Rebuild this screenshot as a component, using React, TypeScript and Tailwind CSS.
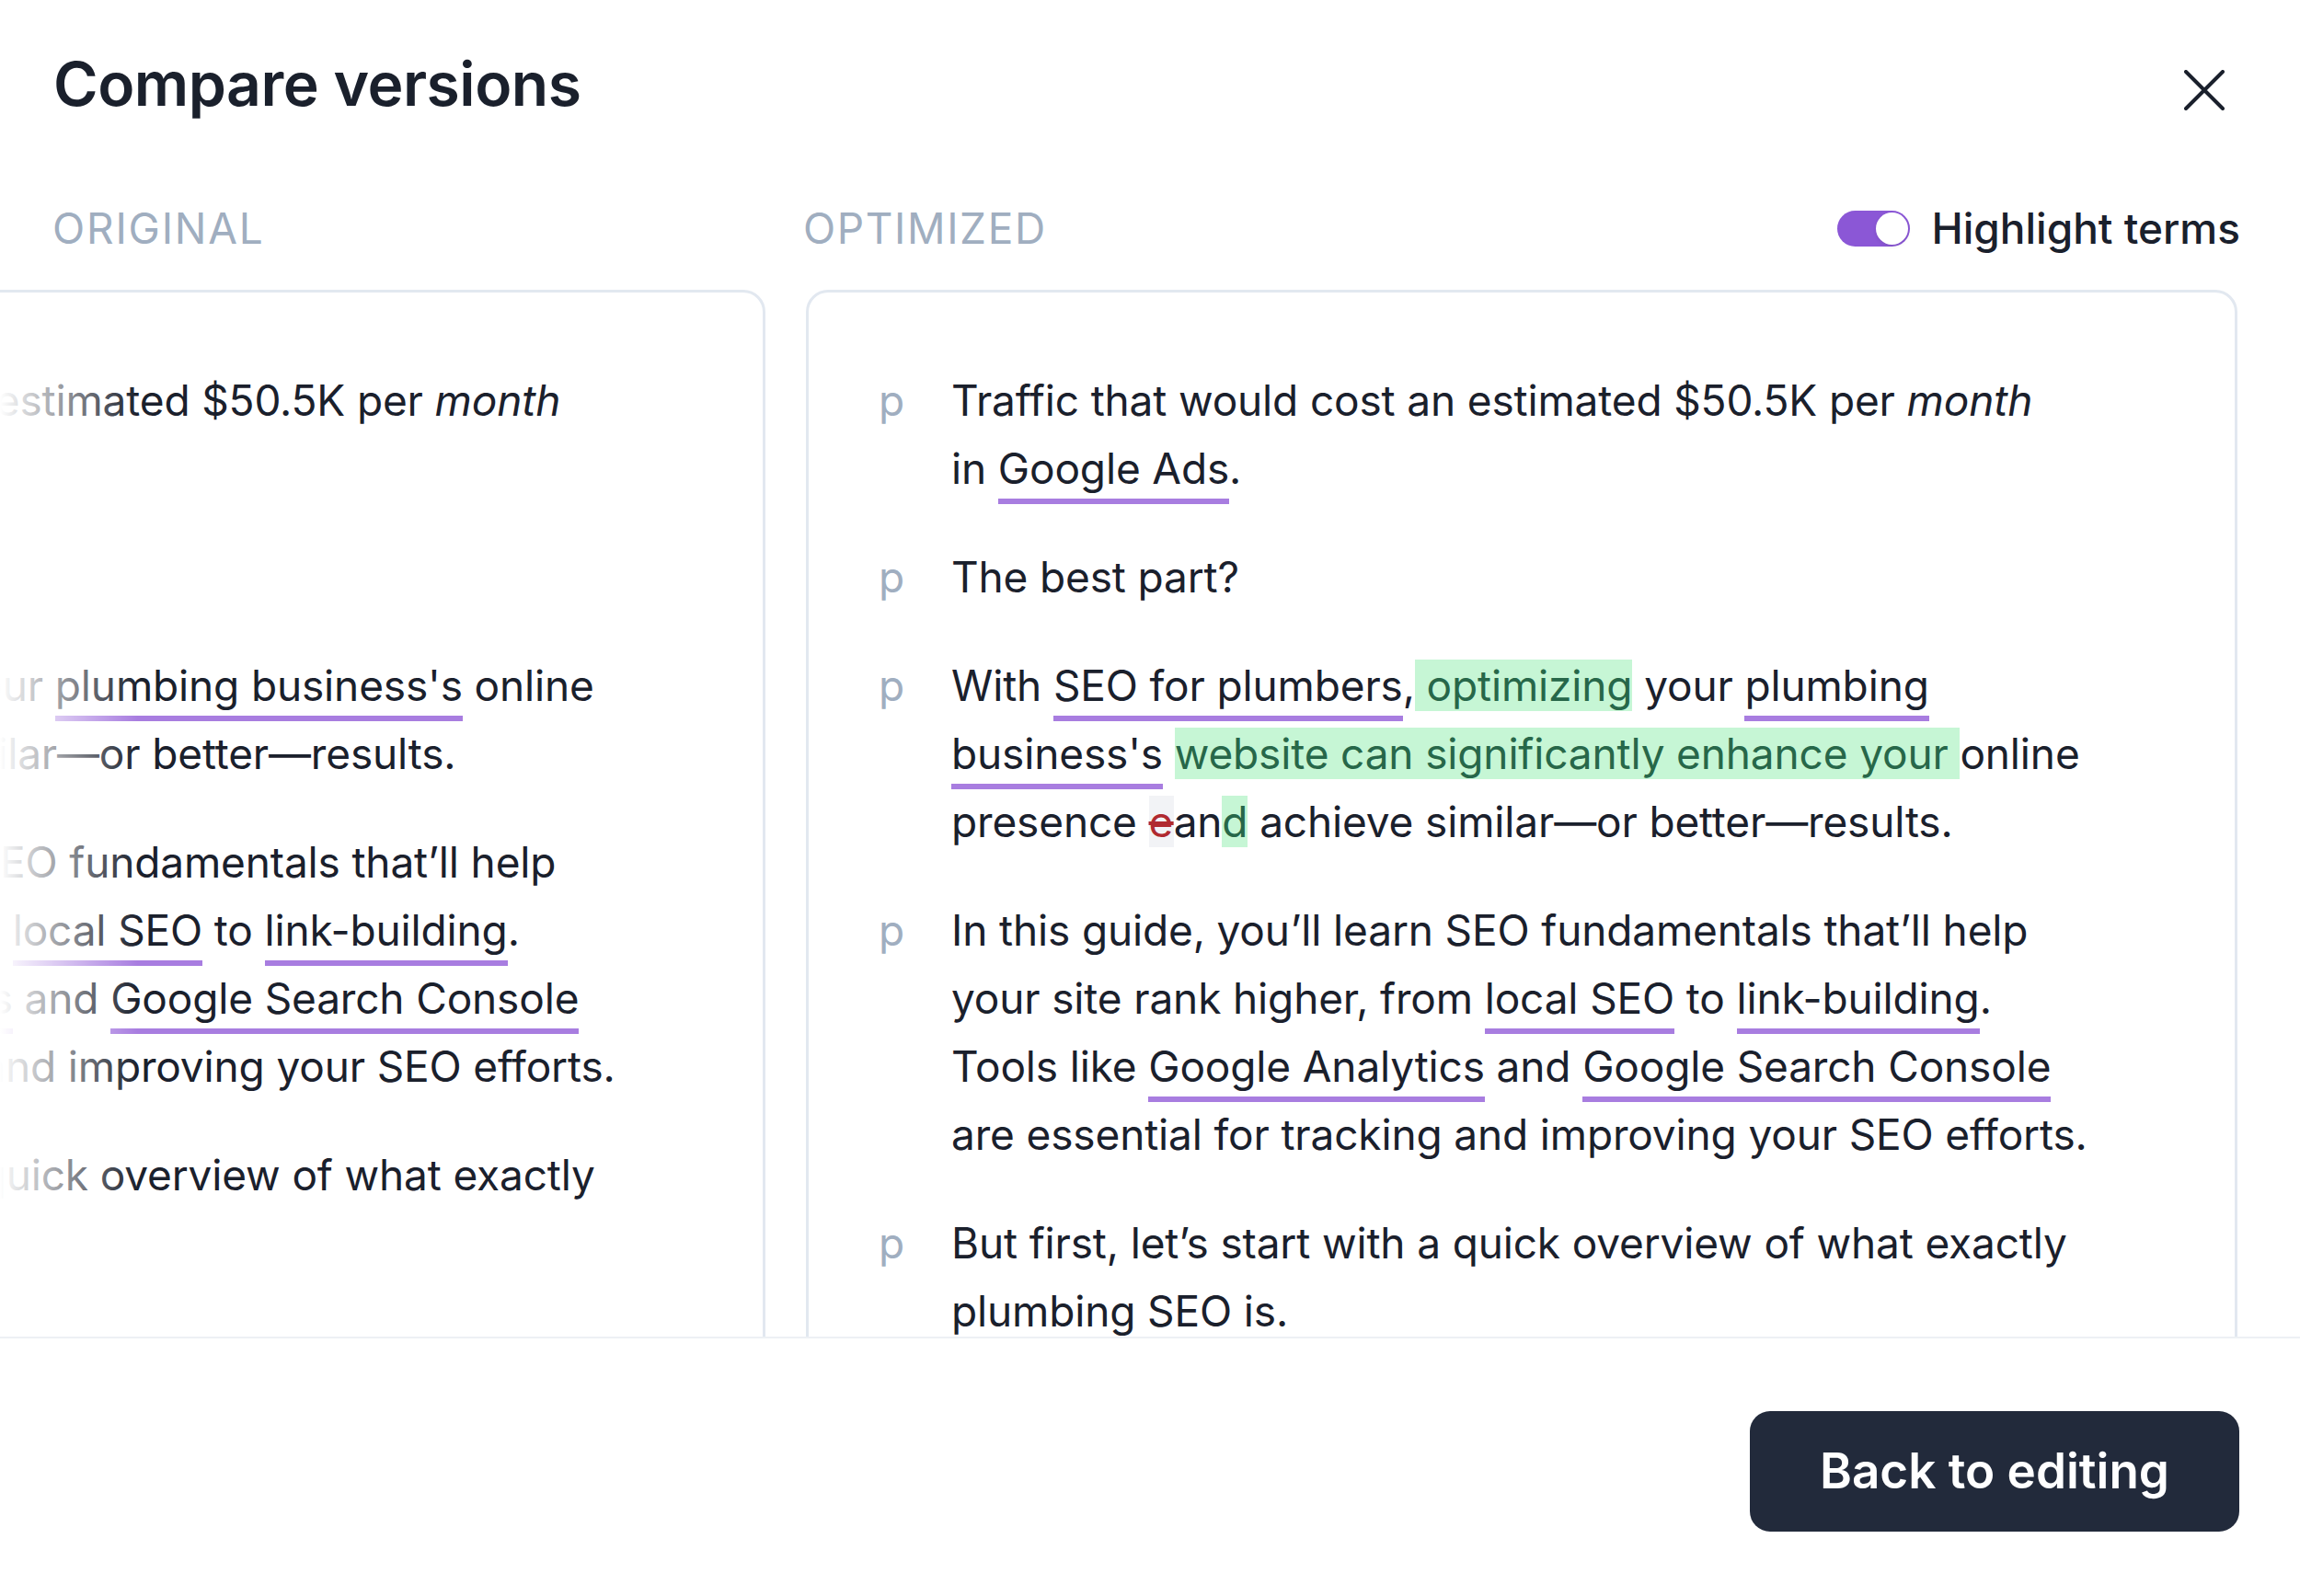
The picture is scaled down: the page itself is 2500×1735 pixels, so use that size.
import React from "react";

const U = ({ children }: { children: React.ReactNode }) => (
  <span className="border-b-[6px] border-[#a87de0] pb-[5px]">{children}</span>
);

const G = ({ children }: { children: React.ReactNode }) => (
  <span className="bg-[#c6f6d5] text-[#276749]">{children}</span>
);

const P = ({ children }: { children: React.ReactNode }) => (
  <div className="flex">
    <div className="w-[79px] shrink-0 text-[#a0aec0]">p</div>
    <div className="whitespace-nowrap">{children}</div>
  </div>
);

function Panel({ original }: { original: boolean }) {
  return (
    <div className="w-[1556px] h-[1400px] shrink-0 rounded-[24px] border-[3px] border-[#e2e8f0] bg-white pt-[80px] pl-[76px]">
      <div className="flex flex-col gap-[44px] text-[46px] leading-[74px] tracking-[-0.15px] text-[#1a202c]">
        <P>
          Traffic that would cost an estimated $50.5K per <i>month</i>
          <br />
          in <U>Google Ads</U>.
        </P>
        <P>The best part?</P>
        {original ? (
          <P>
            With <U>SEO for plumbers</U>, your <U>plumbing business's</U> online
            <br />
            presence and achieve similar—or better—results.
          </P>
        ) : (
          <P>
            With <U>SEO for plumbers</U>,<G> optimizing</G> your <U>plumbing </U>
            <br />
            <U>business's</U> <G>website can significantly enhance your </G>online
            <br />
            presence{" "}
            <span className="bg-[#f2f3f6] text-[#b02a30] line-through decoration-[#b02a30]">e</span>
            an<G>d</G> achieve similar—or better—results.
          </P>
        )}
        <P>
          In this guide, you’ll learn SEO fundamentals that’ll help
          <br />
          your site rank higher, from <U>local SEO</U> to <U>link-building</U>.
          <br />
          Tools like <U>Google Analytics</U> and <U>Google Search Console</U>
          <br />
          are essential for tracking and improving your SEO efforts.
        </P>
        <P>
          But first, let’s start with a quick overview of what exactly
          <br />
          plumbing SEO is.
        </P>
      </div>
    </div>
  );
}

export default function App() {
  return (
    <div
      className="w-[2500px] h-[1735px] overflow-hidden bg-white flex flex-col text-[#1a202c]"
      style={{ fontFamily: "Inter, 'Noto Sans', sans-serif" }}
    >
      {/* Header */}
      <div className="h-[132px] shrink-0 flex justify-between items-start pl-[58px] pr-[82px] pt-[51px]">
        <h1 className="text-[66px] leading-[80px] font-semibold tracking-[-0.5px] text-[#1a202c]">
          Compare versions
        </h1>
        <button className="mt-[25px]" aria-label="Close">
          <svg width="44" height="44" viewBox="0 0 44 44" fill="none">
            <path d="M2 2L42 42M42 2L2 42" stroke="#1a202c" strokeWidth="4" strokeLinecap="round" />
          </svg>
        </button>
      </div>

      {/* Content */}
      <div className="flex-1 overflow-hidden pt-[88px]">
        <div className="flex gap-[44px]">
          {/* Original column */}
          <div className="w-[832px] shrink-0 flex flex-col">
            <div className="h-[56px] pl-[57px] text-[46px] leading-[56px] tracking-[1.8px] text-[#a0aec0]">
              ORIGINAL
            </div>
            <div className="relative mt-[39px] overflow-hidden">
              <div className="-ml-[724px]">
                <Panel original />
              </div>
              <div className="absolute left-0 top-[3px] bottom-0 w-[150px] bg-linear-to-r from-white to-white/0" />
            </div>
          </div>

          {/* Optimized column */}
          <div className="w-[1556px] shrink-0 flex flex-col">
            <div className="h-[56px] flex items-center justify-between -mr-[3px]">
              <div className="-ml-[3px] text-[46px] leading-[56px] tracking-[1.6px] text-[#a0aec0]">OPTIMIZED</div>
              <div className="flex items-center gap-[23px]">
                <div className="w-[79px] h-[39px] rounded-full bg-[#8b57d6] p-[2px] flex justify-end">
                  <div className="w-[35px] h-[35px] rounded-full bg-white shadow-[0_2px_4px_rgba(0,0,0,0.08)]" />
                </div>
                <span className="text-[46px] leading-[56px] font-medium text-[#1a202c]">Highlight terms</span>
              </div>
            </div>
            <div className="mt-[39px]">
              <Panel original={false} />
            </div>
          </div>
        </div>
      </div>

      {/* Footer */}
      <div className="h-[282px] shrink-0 border-t-2 border-[#edf0f4] flex justify-end items-start pt-[79px] pr-[66px]">
        <button className="w-[532px] h-[131px] rounded-[22px] bg-[#222a3b] text-white text-[53px] font-semibold flex items-center justify-center">
          Back to editing
        </button>
      </div>
    </div>
  );
}
